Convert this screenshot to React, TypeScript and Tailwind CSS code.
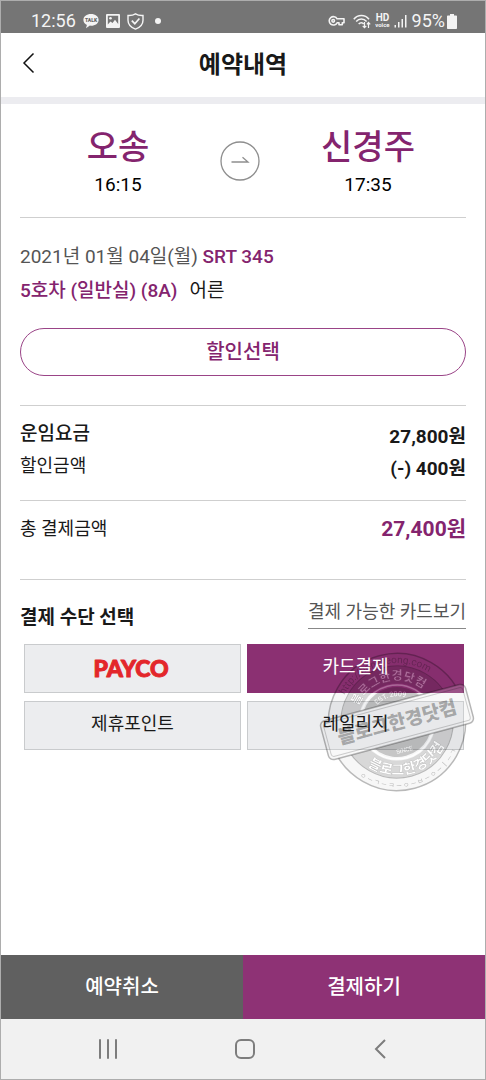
import type { ReactNode } from 'react'
import clsx from 'clsx'

const fares = [
  { label: '운임요금', value: '27,800원', strong: true },
  { label: '할인금액', value: '(-) 400원', strong: false },
]

function StatusBar() {
  return (
    <div className="flex h-8 items-center justify-between bg-[#757575] pr-7 pl-7 pt-2 text-[#f4f4f4]">
      <div className="flex items-center gap-[7px]">
        <span className="pl-0.5 text-lg leading-6">12:56</span>
        <svg width="16" height="16" viewBox="0 0 16 16" aria-hidden="true">
          <path d="M8 1C3.600 1 .4 3.500 .4 6.900c0 2.200 1.400 4 3.500 5L3 15.300l3.900-2.700 1.100.1c4.400 0 7.600-2.500 7.600-5.800S12.400 1 8 1z" fill="currentColor" />
          <text x="8" y="9" fontSize="5" fontWeight="900" textAnchor="middle" fill="#666">TALK</text>
        </svg>
        <svg width="14" height="14" viewBox="0 0 14 14" aria-hidden="true">
          <path d="M1 0h12a1 1 0 0 1 1 1v12a1 1 0 0 1-1 1H1a1 1 0 0 1-1-1V1a1 1 0 0 1 1-1zM1.800 1.800v8.700l2.700-3 2 1.500 2.500-3.200 3.200 4.200V1.800z" fill="currentColor" fillRule="evenodd" />
          <circle cx="4.500" cy="4.300" r="1.300" fill="currentColor" />
        </svg>
        <svg width="17" height="17" viewBox="0 0 17 17" fill="none" stroke="currentColor" strokeWidth="1.400" aria-hidden="true">
          <path d="M8.500.9C6.500 2.100 3.700 2.700 1 2.500v4.700c0 4 3.200 7.300 7.500 8.900 4.300-1.600 7.500-4.900 7.500-8.900V2.500c-2.700.2-5.500-.4-7.500-1.600z" />
          <path d="M4.800 7.700l3 3 4.600-5.200" strokeWidth="1.700" />
        </svg>
        <span className="ml-1 size-1.5 rounded-full bg-[#f4f4f4]" />
      </div>
      <div className="flex items-center gap-1">
        <svg width="17" height="12" viewBox="0 0 17 12" fill="none" stroke="currentColor" strokeWidth="1.600" className="mr-1" aria-hidden="true">
          <path d="M9.100 3.800A4.200 4.200 0 1 0 9.100 7.800H11v2h3.300v-2H16v-4z" strokeLinejoin="round" />
          <circle cx="5.200" cy="5.800" r="1.300" />
        </svg>
        <svg width="18" height="15" viewBox="0 0 18 15" fill="none" stroke="currentColor" aria-hidden="true">
          <path d="M.8 5.200C4.800.2 12 .2 16 5.200M3.200 7.600c2.900-3.400 7.500-3.400 10.400 0M5.700 10c1.500-1.800 3.900-1.800 5 0" strokeWidth="1.500" />
          <path d="M11.500 8v5.500M9.700 11.800l1.800 1.900 1.800-1.900M15.500 14V8.600M13.900 10.300l1.600-1.800 1.700 1.800" strokeWidth="1.200" />
        </svg>
        <span className="flex flex-col items-center font-bold">
          <span className="text-[10px] leading-[8px]">HD</span>
          <span className="text-[6px] leading-[6px]">voice</span>
        </span>
        <svg width="14" height="14" viewBox="0 0 14 14" fill="currentColor" aria-hidden="true">
          <path d="M.5 11h1.500v2.500H.5zM4 8h1.500v5.500H4zM7.500 5H9v8.500H7.500zM11 1h1.500v12.500H11z" />
        </svg>
        <span className="flex items-center gap-0.5 text-lg leading-6">
          95%
          <svg width="10" height="15" viewBox="0 0 10 15" fill="currentColor" aria-hidden="true">
            <path d="M3 0h4v1.500h2.200a.8.8 0 0 1 .8.8v11.900a.8.8 0 0 1-.8.8H.8a.8.8 0 0 1-.8-.8V2.300a.8.8 0 0 1 .8-.8H3z" />
          </svg>
        </span>
      </div>
    </div>
  )
}

function Station({ name, time }: { name: string; time: string }) {
  return (
    <div className="w-[196px] text-center">
      <p className="text-[34px] leading-[44px] font-medium text-[#84246e]">{name}</p>
      <p className="text-[19px] leading-8 text-black">{time}</p>
    </div>
  )
}

function MethodButton({ active, children }: { active?: boolean; children: ReactNode }) {
  return (
    <button
      type="button"
      aria-pressed={!!active}
      className={clsx(
        'flex h-[49px] items-center justify-center border pb-1 text-lg',
        active ? 'border-[#8b3072] bg-[#8b3072] text-white' : 'border-[#c9cbcd] bg-[#ecedef] text-[#191919]',
      )}
    >
      <span className="relative z-20">{children}</span>
    </button>
  )
}

// round seal with a name plate across the middle, the whole thing tilted
function Stamp() {
  return (
    <svg
      className="pointer-events-none absolute -right-2.5 top-[6px] z-10"
      width="158"
      height="144"
      viewBox="-79 -72 158 144"
      aria-hidden="true"
    >
      <defs>
        <mask id="outside-plate">
          <rect x="-80" y="-80" width="160" height="160" fill="#fff" />
          <rect x="-75" y="-20" width="150" height="40" rx="5" fill="#000" />
        </mask>
        <path id="url-arc" d="M-59 0A59 59 0 0 1 59 0" />
        <path id="top-arc" d="M-42 0A42 42 0 0 1 42 0" />
        <path id="bottom-arc" d="M-53 0A53 53 0 0 0 53 0" />
        <path id="est-arc" d="M-26 0A26 26 0 0 1 26 0" />
        <path id="rim-arc" d="M-66 0A66 66 0 0 0 66 0" />
      </defs>
      <g transform="rotate(-15)">
        <g mask="url(#outside-plate)" opacity="0.270">
          <circle r="68.500" fill="#000" fillOpacity="0.120" stroke="#000" strokeWidth="1.500" />
          <circle r="56" fill="none" stroke="#000" strokeWidth="1.200" />
          <circle r="47" fill="none" stroke="#000" strokeWidth="17" opacity="0.500" />
          <circle r="37" fill="none" stroke="#fff" strokeWidth="1.500" />
          <circle r="35" fill="#000" opacity="0.800" />
          <text fontSize="10" fill="#000">
            <textPath href="#url-arc" startOffset="50%" textAnchor="middle">http://hankyeong.com</textPath>
          </text>
          <text fontSize="12" fontWeight="900" fill="#fff" stroke="#000" strokeWidth="0.400">
            <textPath href="#top-arc" startOffset="50%" textAnchor="middle">블로그한경닷컴</textPath>
          </text>
          <text fontSize="14" fontWeight="900" fill="#fff" stroke="#000" strokeWidth="0.400">
            <textPath href="#bottom-arc" startOffset="50%" textAnchor="middle">블로그한경닷컴</textPath>
          </text>
          <text fontSize="7" fill="#fff">
            <textPath href="#est-arc" startOffset="50%" textAnchor="middle">EST. 2009</textPath>
          </text>
          <text y="31" fontSize="6" fill="#fff" textAnchor="middle">SINCE</text>
          <text fontSize="7" fill="#000">
            <textPath href="#rim-arc" startOffset="50%" textAnchor="middle">ㅇ — ㄱ — ㅋ — ㅇ — ㅂ — ㅇ — ㅣ — ㄱ</textPath>
          </text>
        </g>
        <rect x="-75" y="-20" width="150" height="40" rx="5" fill="#ddd" fillOpacity="0.200" stroke="#000" strokeOpacity="0.280" strokeWidth="1.500" />
        <rect x="-72" y="-17" width="144" height="34" rx="3" fill="none" stroke="#000" strokeOpacity="0.180" />
        <text y="7" fontSize="19" fontWeight="900" textAnchor="middle" fill="#000" fillOpacity="0.300">블로그한경닷컴</text>
      </g>
    </svg>
  )
}

export default function App() {
  return (
    <div className="flex min-h-screen flex-col border border-[#adadad] bg-white font-[Roboto,'Noto_Sans_CJK_KR',sans-serif] text-[#191919]">
      <StatusBar />

      <header className="grid h-16 grid-cols-[48px_1fr_48px] items-center pb-1">
        <button type="button" aria-label="뒤로" className="flex h-12 items-center pl-5">
          <svg width="14" height="22" viewBox="0 0 14 22" fill="none" stroke="#111" strokeWidth="1.500" aria-hidden="true">
            <path d="M12.500 1.500L3 11l9.500 9.500" />
          </svg>
        </button>
        <h1 className="pt-1 text-center text-2xl font-bold">예약내역</h1>
      </header>
      <div className="h-[7px] bg-[#ececf0]" />

      <main className="flex-1 px-[19px]">
        <section className="flex items-center justify-between border-b border-[#cfcfcf] pt-[21px] pb-4">
          <Station name="오송" time="16:15" />
          <svg width="40" height="40" viewBox="0 0 40 40" fill="none" stroke="#8e8e8e" className="mr-1.5 mb-1" aria-hidden="true">
            <circle cx="20" cy="20" r="19" strokeWidth="1.300" />
            <path d="M11.500 21H28l-5.500-4.800" strokeWidth="1.300" />
          </svg>
          <Station name="신경주" time="17:35" />
        </section>

        <section className="border-b border-[#cfcfcf] pt-[22px] pb-[29px]">
          <p className="text-[19px] leading-[34px] text-[#555]">
            2021년 01월 04일(월) <span className="font-medium text-[#84246e]">SRT 345</span>
          </p>
          <p className="text-[19px] leading-[34px]">
            <span className="mr-3 font-medium text-[#84246e]">5호차 (일반실) (8A)</span>어른
          </p>
          <button type="button" className="mt-5 h-12 w-full rounded-full border border-[#9a4487] text-xl font-medium text-[#84246e]">
            할인선택
          </button>
        </section>

        <dl className="border-b border-[#cfcfcf] pt-3 pb-[18px]">
          {fares.map((fare) => (
            <div key={fare.label} className="flex h-8 justify-between leading-8">
              <dt className={fare.strong ? 'text-[19px] font-medium' : 'text-lg leading-8'}>{fare.label}</dt>
              <dd className="pt-[3px] text-[19px] font-bold">{fare.value}</dd>
            </div>
          ))}
        </dl>

        <dl className="flex h-[79px] justify-between border-b border-[#cfcfcf] pt-3 leading-8">
          <dt className="text-lg leading-8">총 결제금액</dt>
          <dd className="text-[21px] font-bold text-[#84246e]">27,400원</dd>
        </dl>

        <section className="pt-4">
          <div className="flex items-start justify-between">
            <h2 className="pt-1.5 text-[19px] leading-8 font-bold">결제 수단 선택</h2>
            <a href="#cards" className="border-b border-[#888] text-lg leading-8 text-[#555]">
              결제 가능한 카드보기
            </a>
          </div>
          <div className="relative mt-2.5 grid grid-cols-2 gap-x-1.5 gap-y-2 pr-0.5 pl-1">
            <MethodButton>
              <svg width="90" height="30" viewBox="0 0 90 30" className="mt-1">
                <text x="43" y="23" textAnchor="middle" className="font-[Lato,sans-serif] text-[23px] font-black" fill="#e3262b" stroke="#e3262b" strokeWidth="1" strokeLinejoin="round">
                  PAYCO
                </text>
              </svg>
            </MethodButton>
            <MethodButton active>카드결제</MethodButton>
            <MethodButton>제휴포인트</MethodButton>
            <MethodButton>레일리지</MethodButton>
            <Stamp />
          </div>
        </section>
      </main>

      <footer>
        <div className="grid h-16 grid-cols-2 text-xl font-medium text-white">
          <button type="button" className="bg-[#606060]">예약취소</button>
          <button type="button" className="bg-[#8e3275]">결제하기</button>
        </div>
        <nav className="grid h-[60px] grid-cols-[214px_1fr_210px] items-center bg-[#f1f1f1] text-[#7d7d7d]">
          <button type="button" aria-label="최근 앱" className="flex justify-center">
            <svg width="20" height="20" viewBox="0 0 20 20" stroke="currentColor" strokeWidth="2" strokeLinecap="round">
              <path d="M2 1v18M10 1v18M18 1v18" />
            </svg>
          </button>
          <button type="button" aria-label="홈" className="flex justify-center">
            <svg width="22" height="22" viewBox="0 0 22 22" fill="none" stroke="currentColor" strokeWidth="2">
              <rect x="2" y="2" width="18" height="18" rx="5" />
            </svg>
          </button>
          <button type="button" aria-label="이전" className="flex justify-center">
            <svg width="14" height="20" viewBox="0 0 14 20" fill="none" stroke="currentColor" strokeWidth="2">
              <path d="M12 1L3 10l9 9" />
            </svg>
          </button>
        </nav>
      </footer>
    </div>
  )
}
